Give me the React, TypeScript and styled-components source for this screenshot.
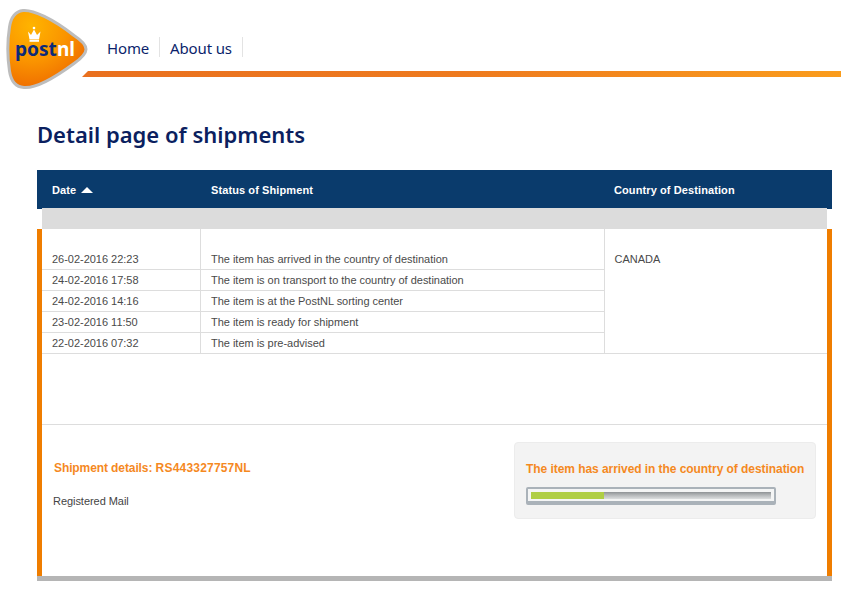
import styled, { createGlobalStyle } from 'styled-components';

const GlobalStyle = createGlobalStyle`
  html, body {
    margin: 0;
    padding: 0;
    background: #fff;
    font-family: "Liberation Sans", Arial, sans-serif;
  }
`;

const Header = styled.header`
  display: flex;
  align-items: flex-start;
  height: 90px;
`;

const LogoWrap = styled.div`
  flex-shrink: 0;
  width: 90px;
  height: 90px;
`;

const HeaderRight = styled.div`
  flex: 1;
  margin-left: -8px;
  padding-top: 37px;
`;

const Nav = styled.nav`
  display: flex;
  padding-left: 25px;
  height: 20px;
`;

const NavLink = styled.a`
  font-family: "Noto Sans", sans-serif;
  font-size: 15px;
  line-height: 22px;
  letter-spacing: -0.15px;
  color: #0b1f6b;
  padding-right: 10px;
  margin-right: 10px;
  border-right: 1px solid #e3e3e3;
  height: 20px;
`;

const OrangeBar = styled.div`
  height: 6px;
  margin-top: 14px;
  background: linear-gradient(90deg, #e9701f 0%, #ee7a1e 50%, #fa9c1c 100%);
  clip-path: polygon(6px 0, 100% 0, 100% 100%, 0 100%);
`;

const Content = styled.main`
  margin: 0 9px 0 37px;
`;

const Title = styled.h1`
  font-family: "Noto Sans", sans-serif;
  font-size: 22px;
  line-height: 32px;
  font-weight: 600;
  color: #0b1f5f;
  margin: 28px 0 20px;
`;

const HeadRow = styled.div`
  display: grid;
  grid-template-columns: 159px 403px 1fr;
  align-items: center;
  height: 39px;
  padding-left: 15px;
  background: #0a3b6c;
  color: #fff;
  font-size: 11px;
  font-weight: 700;
  letter-spacing: 0.1px;
`;

const SortLabel = styled.span`
  display: flex;
  align-items: center;
  gap: 5px;
`;

const SortArrow = styled.i`
  width: 0;
  height: 0;
  border-left: 6px solid transparent;
  border-right: 6px solid transparent;
  border-bottom: 6px solid #fff;
`;

const GreyStrip = styled.div`
  height: 21px;
  margin: -1px 5px 0;
  background: #dcdcdc;
`;

const Panel = styled.section`
  border-left: 5px solid #ef7d00;
  border-right: 5px solid #ef7d00;
`;

const Table = styled.table`
  width: 100%;
  border-collapse: collapse;
  table-layout: fixed;
  font-size: 11px;
  letter-spacing: -0.02px;
  color: #4a4a4a;
  border-bottom: 1px solid #ddd;

  td {
    padding: 0 10px;
    height: 20px;
    line-height: 20px;
    border-right: 1px solid #ddd;
    border-bottom: 1px solid #ddd;
    vertical-align: middle;
  }

  td:nth-child(2) {
    padding-left: 10.5px;
  }

  tr:first-child td {
    height: 40px;
    padding-top: 20px;
    box-sizing: border-box;
  }

  tr:last-child td {
    border-bottom: none;
  }
`;

const DateCol = styled.col`
  width: 158px;
`;

const StatusCol = styled.col`
  width: 404px;
`;

const CountryCell = styled.td`
  && {
    border-right: none;
    border-bottom: none;
    vertical-align: top;
  }
`;

const Spacer = styled.div`
  height: 70px;
  border-bottom: 1px solid #ddd;
`;

const Details = styled.div`
  display: flex;
  justify-content: space-between;
  align-items: flex-start;
  height: 151px;
  padding: 17px 11px 0 12px;
  box-sizing: border-box;
`;

const DetailsText = styled.div`
  padding-top: 19px;
`;

const ShipmentTitle = styled.h2`
  margin: 0;
  font-size: 12px;
  line-height: 14px;
  font-weight: 700;
  letter-spacing: -0.1px;
  color: #f5891f;
`;

const TrackingCode = styled.span`
  letter-spacing: 0.2px;
`;

const MailType = styled.p`
  margin: 20px 0 0 -1px;
  font-size: 11px;
  line-height: 13px;
  letter-spacing: -0.05px;
  color: #444;
`;

const StatusBox = styled.div`
  width: 302px;
  height: 77px;
  box-sizing: border-box;
  padding: 19px 11px 0;
  background: #f3f3f3;
  border: 1px solid #ececec;
  border-radius: 4px;
`;

const StatusText = styled.div`
  font-size: 12px;
  line-height: 15px;
  font-weight: 700;
  letter-spacing: -0.06px;
  color: #f5891f;
  white-space: nowrap;
`;

const ProgressOuter = styled.div`
  width: 250px;
  height: 18px;
  margin-top: 10px;
  box-sizing: border-box;
  border: 2px solid #aab2b9;
  border-bottom-width: 4px;
  border-radius: 2px;
  background: #f4f5f5;
  padding: 3px 3px 2px;
`;

const ProgressTrack = styled.div`
  height: 100%;
  background: linear-gradient(180deg, #8f9396 0%, #b5b8ba 45%, #dcdedf 100%);
`;

const ProgressFill = styled.div`
  height: 100%;
  background: #afce45;
`;

const BottomRule = styled.div`
  height: 5px;
  background: #b5b5b5;
`;

const rows = [
  { date: '26-02-2016 22:23', status: 'The item has arrived in the country of destination' },
  { date: '24-02-2016 17:58', status: 'The item is on transport to the country of destination' },
  { date: '24-02-2016 14:16', status: 'The item is at the PostNL sorting center' },
  { date: '23-02-2016 11:50', status: 'The item is ready for shipment' },
  { date: '22-02-2016 07:32', status: 'The item is pre-advised' },
];

function Logo() {
  return (
    <svg width="90" height="90" viewBox="0 0 90 90">
      <defs>
        <radialGradient id="logoFill" cx="0.3" cy="0.2" r="0.85">
          <stop offset="0" stopColor="#ffb400" />
          <stop offset="0.55" stopColor="#fa9300" />
          <stop offset="1" stopColor="#ee6a00" />
        </radialGradient>
      </defs>
      <path
        d="M23 10.500C33 9.500 53 19 74 35.500C90 46 90 52 74 63.500C53 79 35 88.500 24 87.500C15 87 11 81 9.500 71C7.500 58 7.500 40 9.500 27C11 17 15 11.500 23 10.500Z"
        fill="url(#logoFill)"
        stroke="#bdbdbd"
        strokeWidth="3"
      />
      <path d="M28 31.500L31 35L34 29.500L37 35L40.500 31.500L39 39.500H29.500Z" fill="#fff" />
      <rect x="29.500" y="40" width="9.500" height="1.800" fill="#fff" />
      <circle cx="34" cy="28" r="1.300" fill="#fff" />
      <text
        x="15"
        y="56"
        fontFamily="'Noto Sans', sans-serif"
        fontSize="20"
        fontWeight="700"
        textLength="60"
        lengthAdjust="spacingAndGlyphs"
      >
        <tspan fill="#0b2a7a">post</tspan>
        <tspan fill="#fff">nl</tspan>
      </text>
    </svg>
  );
}

export default function App() {
  return (
    <>
      <GlobalStyle />
      <Header>
        <LogoWrap>
          <Logo />
        </LogoWrap>
        <HeaderRight>
          <Nav>
            <NavLink>Home</NavLink>
            <NavLink>About us</NavLink>
          </Nav>
          <OrangeBar />
        </HeaderRight>
      </Header>
      <Content>
        <Title>Detail page of shipments</Title>
        <HeadRow>
          <SortLabel>
            Date <SortArrow />
          </SortLabel>
          <span>Status of Shipment</span>
          <span>Country of Destination</span>
        </HeadRow>
        <GreyStrip />
        <Panel>
          <Table>
            <colgroup>
              <DateCol />
              <StatusCol />
              <col />
            </colgroup>
            <tbody>
              {rows.map((row, i) => (
                <tr key={row.date}>
                  <td>{row.date}</td>
                  <td>{row.status}</td>
                  {i === 0 && <CountryCell rowSpan={5}>CANADA</CountryCell>}
                </tr>
              ))}
            </tbody>
          </Table>
          <Spacer />
          <Details>
            <DetailsText>
              <ShipmentTitle>
                Shipment details: <TrackingCode>RS443327757NL</TrackingCode>
              </ShipmentTitle>
              <MailType>Registered Mail</MailType>
            </DetailsText>
            <StatusBox>
              <StatusText>The item has arrived in the country of destination</StatusText>
              <ProgressOuter>
                <ProgressTrack>
                  <ProgressFill style={{ width: `${(73 / 240) * 100}%` }} />
                </ProgressTrack>
              </ProgressOuter>
            </StatusBox>
          </Details>
        </Panel>
        <BottomRule />
      </Content>
    </>
  );
}
